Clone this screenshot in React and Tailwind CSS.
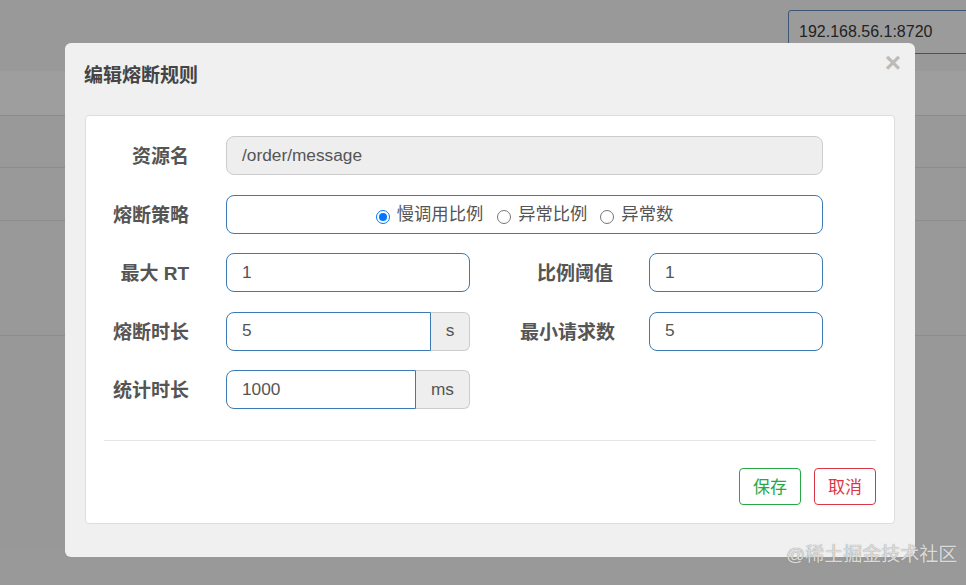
import React from "react";

const font = { fontFamily: '"Liberation Sans", "Noto Sans CJK SC", sans-serif' };

function Label({ children, w, pr }) {
  return (
    <div
      className={`${w} ${pr} h-[39px] shrink-0 text-right text-[19px] font-bold text-[#555] leading-[36px] pt-[3px]`}
    >
      {children}
    </div>
  );
}

function TextInput({ value, w, grouped, readOnly }) {
  return (
    <div
      className={`${w} h-[39px] border pl-[15px] flex items-center text-[17.3px] text-[#555] ${
        readOnly ? "bg-[#eeeeee] border-[#cccccc]" : "bg-white border-[#3d79b3]"
      } ${grouped ? "rounded-l-[8px]" : "rounded-[8px]"}`}
    >
      {value}
    </div>
  );
}

function Addon({ children, w }) {
  return (
    <div
      className={`${w} h-[39px] border border-l-0 border-[#cccccc] bg-[#eeeeee] rounded-r-[6px] flex items-center justify-center text-[17.3px] text-[#555]`}
    >
      {children}
    </div>
  );
}

function Radio({ checked, label, className }) {
  return (
    <label className={`flex items-center ${className}`}>
      <span
        className={`w-[14px] h-[14px] mt-[3px] rounded-full flex items-center justify-center bg-white ${
          checked ? "border-[1.5px] border-[#0075ff]" : "border border-[#767676]"
        }`}
      >
        {checked && <span className="w-[8px] h-[8px] rounded-full bg-[#0075ff]" />}
      </span>
      <span className="ml-[7px] text-[17.3px] text-[#555]">{label}</span>
    </label>
  );
}

export default function App() {
  return (
    <div className="relative w-[966px] h-[585px] overflow-hidden bg-[#999999]" style={font}>
      {/* page behind the modal backdrop */}
      <div className="h-[71px] flex justify-end pt-[10px]">
        <div className="w-[190px] h-[44px] -mr-[12px] border border-[#3b5673] rounded-[3px] bg-[#9b9b9b] pl-[10px] flex items-center text-[16px] text-[#222]">
          192.168.56.1:8720
        </div>
      </div>
      <div className="h-[45px] bg-[#9e9e9e] border-b border-[#8c8c8c]" />
      <div className="h-[52px] border-b border-[#8c8c8c]" />
      <div className="h-[53px] border-b border-[#8c8c8c]" />
      <div className="h-[115px] border-b border-[#8c8c8c]" />
      <div className="h-[211px] bg-[#989898]" />

      {/* modal */}
      <div className="absolute left-[65px] top-[43px] w-[850px] h-[514px] bg-[#f0f0f0] rounded-[6px]">
        <div className="h-[72px] flex items-start pt-[22px] pl-[19px] pr-[14px]">
          <h4 className="text-[19px] leading-[22px] font-bold text-[#444]">编辑熔断规则</h4>
          <span className="ml-auto -mt-[12px] text-[28px] leading-[20px] font-bold text-[#bbbbbb]">×</span>
        </div>

        <div className="mx-[20px] h-[409px] bg-white border border-[#dddddd] rounded-[4px] px-[18px] pt-[20px]">
          <div className="flex flex-col gap-[19.5px]">
            <div className="flex">
              <Label w="w-[122px]" pr="pr-[37px]">资源名</Label>
              <TextInput w="w-[597px]" value="/order/message" readOnly />
            </div>

            <div className="flex">
              <Label w="w-[122px]" pr="pr-[37px]">熔断策略</Label>
              <div className="w-[597px] h-[39px] border border-[#3d79b3] rounded-[8px] flex items-center justify-center pt-[2px]">
                <Radio checked label="慢调用比例" />
                <Radio label="异常比例" className="ml-[14px]" />
                <Radio label="异常数" className="ml-[13px]" />
              </div>
            </div>

            <div className="flex">
              <Label w="w-[122px]" pr="pr-[37px]">最大 RT</Label>
              <TextInput w="w-[244px]" value="1" />
              <Label w="w-[179px]" pr="pr-[36px]">比例阈值</Label>
              <TextInput w="w-[174px]" value="1" />
            </div>

            <div className="flex">
              <Label w="w-[122px]" pr="pr-[37px]">熔断时长</Label>
              <TextInput w="w-[205px]" value="5" grouped />
              <Addon w="w-[39px]">s</Addon>
              <Label w="w-[179px]" pr="pr-[34px]">最小请求数</Label>
              <TextInput w="w-[174px]" value="5" />
            </div>

            <div className="flex">
              <Label w="w-[122px]" pr="pr-[37px]">统计时长</Label>
              <TextInput w="w-[190px]" value="1000" grouped />
              <Addon w="w-[54px]">ms</Addon>
            </div>
          </div>

          <div className="mt-[31px] border-t border-[#e5e5e5]" />

          <div className="mt-[27px] flex justify-end gap-[13px]">
            <button className="w-[62px] h-[37px] pt-[2px] rounded-[4px] border border-[#28a745] bg-white text-[17px] text-[#28a745]">
              保存
            </button>
            <button className="w-[62px] h-[37px] pt-[2px] rounded-[4px] border border-[#dc3545] bg-white text-[17px] text-[#dc3545]">
              取消
            </button>
          </div>
        </div>
      </div>

      {/* watermark */}
      <div className="absolute left-[786px] top-[543px] text-[19px] leading-[24px] text-[#e8e8e8]/90 [text-shadow:0_0_1px_#777]">
        @稀土掘金技术社区
      </div>
    </div>
  );
}
